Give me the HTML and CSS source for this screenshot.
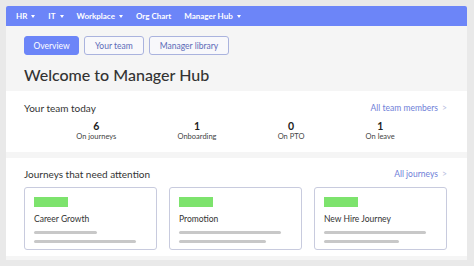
FILE: index.html
```html
<!DOCTYPE html>
<html>
<head>
<meta charset="utf-8">
<link rel="stylesheet" href="styles.css">
</head>
<body>
<div class="frame">
  <nav class="topnav">
    <span class="nav-item">HR <i class="caret"></i></span>
    <span class="nav-item">IT <i class="caret"></i></span>
    <span class="nav-item">Workplace <i class="caret"></i></span>
    <span class="nav-item">Org Chart</span>
    <span class="nav-item">Manager Hub <i class="caret"></i></span>
  </nav>
  <div class="head">
    <div class="tabs">
      <span class="tab tab-active">Overview</span>
      <span class="tab">Your team</span>
      <span class="tab">Manager library</span>
    </div>
    <h1 class="title">Welcome to Manager Hub</h1>
  </div>
  <section class="panel panel-team">
    <div class="panel-head">
      <span class="panel-title">Your team today</span>
      <span class="panel-link">All team members <span class="chev">&gt;</span></span>
    </div>
    <div class="stats">
      <div class="stat"><div class="num">6</div><div class="lbl">On journeys</div></div>
      <div class="stat"><div class="num">1</div><div class="lbl">Onboarding</div></div>
      <div class="stat"><div class="num">0</div><div class="lbl">On PTO</div></div>
      <div class="stat"><div class="num">1</div><div class="lbl">On leave</div></div>
    </div>
  </section>
  <section class="panel panel-journeys">
    <div class="panel-head">
      <span class="panel-title">Journeys that need attention</span>
      <span class="panel-link">All journeys <span class="chev">&gt;</span></span>
    </div>
    <div class="cards">
      <div class="card">
        <div class="tag"></div>
        <div class="card-title">Career Growth</div>
        <div class="line" style="width:63px"></div>
        <div class="line" style="width:102px"></div>
      </div>
      <div class="card">
        <div class="tag"></div>
        <div class="card-title">Promotion</div>
        <div class="line" style="width:102px"></div>
        <div class="line" style="width:87px"></div>
      </div>
      <div class="card">
        <div class="tag"></div>
        <div class="card-title">New Hire Journey</div>
        <div class="line" style="width:102px"></div>
        <div class="line" style="width:75px"></div>
      </div>
    </div>
  </section>
</div>
</body>
</html>
```

FILE: styles.css
```css
html, body {
  margin: 0;
  padding: 0;
}
body {
  background: #e9e9e9;
  font-family: Lato, "Noto Sans", sans-serif;
  width: 474px;
  height: 266px;
  overflow: hidden;
  padding: 6px 7px 6px 6px;
  box-sizing: border-box;
}
.frame {
  background: #f5f5f5;
  height: 254px;
  display: flex;
  flex-direction: column;
  overflow: hidden;
  border-radius: 2px 2px 0 0;
}
.topnav {
  background: #6c85f8;
  height: 20px;
  display: flex;
  align-items: center;
  padding-left: 10px;
  flex-shrink: 0;
}
.nav-item {
  color: #fff;
  font-size: 8px;
  font-weight: 700;
  margin-right: 13px;
  display: flex;
  align-items: center;
  white-space: nowrap;
}
.caret {
  display: inline-block;
  width: 0;
  height: 0;
  border-left: 2.5px solid transparent;
  border-right: 2.5px solid transparent;
  border-top: 3px solid #fff;
  margin-left: 4px;
}
.head {
  padding: 10px 18px 0 18px;
  height: 65px;
  box-sizing: border-box;
  flex-shrink: 0;
}
.tabs {
  display: flex;
  gap: 5px;
}
.tab {
  height: 19px;
  box-sizing: border-box;
  border: 1px solid #aab3de;
  border-radius: 3px;
  font-size: 8.5px;
  color: #5c6bb8;
  display: flex;
  align-items: center;
  justify-content: center;
  padding: 0 10px;
  background: #f8f8fb;
}
.tab-active {
  background: #6c85f8;
  border-color: #6c85f8;
  color: #fff;
  width: 55px;
}
.title {
  margin: 10px 0 0 0;
  font-size: 16px;
  font-weight: 500;
  color: #333;
  line-height: 19px;
}
.panel {
  background: #fff;
  padding: 0 20px 0 18px;
  flex-shrink: 0;
}
.panel-team {
  height: 61px;
  margin-bottom: 6px;
}
.panel-journeys {
  height: 98px;
}
.panel-head {
  display: flex;
  justify-content: space-between;
  align-items: center;
  height: 14px;
}
.panel-team .panel-head {
  margin-top: 10px;
}
.panel-journeys .panel-head {
  margin-top: 9px;
}
.panel-title {
  font-size: 10px;
  color: #333;
}
.panel-link {
  font-size: 8.5px;
  color: #6f80d8;
}
.chev {
  color: #b8bde0;
  margin-left: 2px;
}
.stats {
  display: flex;
  justify-content: space-evenly;
  margin: 5px -9px 0 -9px;
}
.stat {
  text-align: center;
}
.num {
  font-size: 10.5px;
  font-weight: 700;
  color: #222;
  line-height: 12px;
}
.lbl {
  font-size: 7.5px;
  color: #444;
  line-height: 10px;
}
.cards {
  display: flex;
  gap: 12px;
  margin-top: 6px;
}
.card {
  width: 133px;
  height: 63px;
  box-sizing: border-box;
  border: 1px solid #c8cbde;
  border-radius: 3px;
  padding: 9px 9px 0 9px;
}
.tag {
  width: 34px;
  height: 10px;
  background: #7de36d;
}
.card-title {
  font-size: 8.5px;
  color: #333;
  margin-top: 6px;
  line-height: 12px;
}
.line {
  height: 3px;
  background: #c8c8c8;
  border-radius: 2px;
  margin-top: 6px;
}
```
